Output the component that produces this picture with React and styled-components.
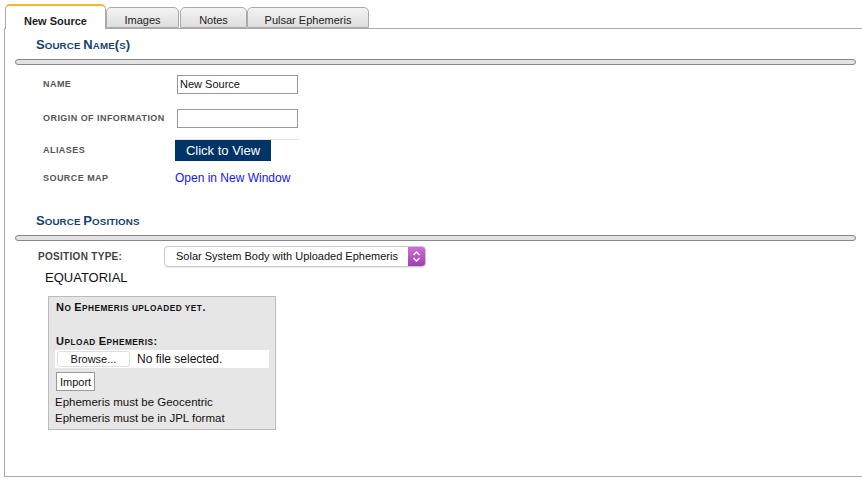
import React from "react";
import styled, { createGlobalStyle } from "styled-components";

const GlobalStyle = createGlobalStyle`
  html, body {
    margin: 0;
    padding: 0;
    background: #ffffff;
    font-family: "Liberation Sans", Arial, sans-serif;
    color: #111;
  }
`;

const Page = styled.div`
  padding: 4px 0 0 4px;
  width: 858px;
  overflow: hidden;
`;

const TabBar = styled.div`
  display: flex;
  align-items: flex-end;
  height: 24px;
  padding-left: 1px;
  position: relative;
  z-index: 1;
`;

const Tab = styled.div`
  box-sizing: border-box;
  width: ${p => p.$w}px;
  height: ${p => (p.$active ? 25 : 21)}px;
  margin-right: ${p => p.$gap || 0}px;
  margin-bottom: ${p => (p.$active ? -1 : 0)}px;
  display: flex;
  align-items: center;
  justify-content: center;
  padding-top: ${p => (p.$active ? 6 : 5)}px;
  font-size: 11px;
  font-weight: ${p => (p.$active ? "bold" : "normal")};
  color: #222;
  border: 1px solid #aaa;
  border-bottom: ${p => (p.$active ? "none" : "1px solid #aaa")};
  border-top: ${p => (p.$active ? "2px solid #f5b731" : "1px solid #aaa")};
  border-radius: 5px 5px 0 0;
  background: ${p =>
    p.$active ? "#ffffff" : "linear-gradient(#f3f3f3, #dedede)"};
`;

const Panel = styled.div`
  border-top: 1px solid #aaa;
  border-left: 1px solid #aaa;
  border-bottom: 1px solid #aaa;
  height: 449px;
  box-sizing: border-box;
  display: flex;
  flex-direction: column;
  align-items: flex-start;
`;

const SectionTitle = styled.div`
  margin: ${p => p.$top}px 0 0 31px;
  height: 16px;
  line-height: 16px;
  font-size: 13px;
  font-weight: bold;
  letter-spacing: 0.1px;
  color: #173f6d;
`;

const Small = styled.span`
  font-size: 0.75em;
  line-height: 1;
`;

const SmallCaps = ({ children }) => {
  const parts = children.match(/[a-z ]+|[^a-z ]+/g) || [];
  return parts.map((part, i) =>
    /[a-z ]/.test(part[0]) ? (
      <Small key={i}>{part.toUpperCase()}</Small>
    ) : (
      <span key={i}>{part}</span>
    )
  );
};

const Rule = styled.div`
  align-self: stretch;
  margin: 6px 6px 0 10px;
  height: 6px;
  box-sizing: border-box;
  background: #e2e2e2;
  border: 1px solid #888;
  border-radius: 3px;
`;

const FieldTable = styled.div`
  margin-top: 3px;
  display: flex;
  flex-direction: column;
`;

const FieldRow = styled.div`
  display: grid;
  grid-template-columns: 132px auto;
  align-items: center;
  height: ${p => p.$h}px;
  padding-left: 38px;
`;

const FieldLabel = styled.div`
  font-size: 9px;
  font-weight: bold;
  color: #555;
  text-transform: uppercase;
  letter-spacing: 0.45px;
`;

const TextInput = styled.input`
  box-sizing: border-box;
  margin-left: 2px;
  width: 121px;
  height: 19px;
  border: 1px solid #999;
  padding: 0 2px;
  font-family: "Liberation Sans", Arial, sans-serif;
  font-size: 11px;
  color: #111;
  outline: none;
`;

const ButtonCell = styled.div`
  width: 125px;
  border-top: 1px solid #e6e6e6;
`;

const ViewButton = styled.button`
  display: block;
  box-sizing: border-box;
  width: 96px;
  height: 21px;
  border: none;
  background: #003366;
  color: #fff;
  font-family: "Liberation Sans", Arial, sans-serif;
  font-size: 13px;
  padding: 0;
  cursor: pointer;
`;

const MapLink = styled.a`
  color: #1515f5;
  font-size: 12px;
  text-decoration: none;
`;

const PositionRow = styled.div`
  margin: 5px 0 0 33px;
  display: flex;
  align-items: center;
  height: 20px;
`;

const PositionLabel = styled.div`
  width: 126px;
  font-size: 10px;
  font-weight: bold;
  color: #444;
  letter-spacing: 0.3px;
`;

const Select = styled.div`
  box-sizing: border-box;
  width: 262px;
  height: 21px;
  display: flex;
  align-items: stretch;
  border: 1px solid #c8c8c8;
  border-radius: 4px;
  background: #fff;
  overflow: hidden;
  box-shadow: 0 1px 1px rgba(0, 0, 0, 0.08);
`;

const SelectText = styled.div`
  flex: 1;
  display: flex;
  align-items: center;
  padding-left: 11px;
  font-size: 11px;
  color: #111;
`;

const Stepper = styled.div`
  width: 17px;
  display: flex;
  align-items: center;
  justify-content: center;
  background: linear-gradient(#cf6fd6, #a23fb0);
`;

const Equatorial = styled.div`
  margin: 4px 0 0 40px;
  line-height: 16px;
  font-size: 13px;
`;

const UploadBox = styled.div`
  margin: 10px 0 0 43px;
  width: 228px;
  box-sizing: border-box;
  background: #e6e6e6;
  border: 1px solid #bbb;
  padding: 2px 6px 3px 6px;
  display: flex;
  flex-direction: column;
  align-items: flex-start;
`;

const BoxHeading = styled.div`
  margin-top: ${p => p.$top || 0}px;
  height: 16px;
  line-height: 16px;
  padding-left: 1px;
  font-size: 11px;
  font-weight: bold;
  letter-spacing: 0.5px;
  color: #111;
`;

const FileRow = styled.div`
  margin-top: 1px;
  align-self: stretch;
  height: 18px;
  background: #fff;
  display: flex;
  align-items: center;
  padding-left: 2px;
  font-size: 12px;
`;

const BrowseButton = styled.div`
  box-sizing: border-box;
  width: 73px;
  height: 16px;
  border: 1px solid #ddd;
  border-radius: 3px;
  display: flex;
  align-items: center;
  justify-content: center;
  font-size: 11px;
  margin-right: 7px;
  background: #fff;
`;

const ImportButton = styled.button`
  margin: 4px 0 0 1px;
  box-sizing: border-box;
  height: 19px;
  padding: 0 3px;
  border: 1px solid #999;
  background: #fff;
  font-family: "Liberation Sans", Arial, sans-serif;
  font-size: 11px;
  color: #111;
`;

const Note = styled.div`
  margin-top: ${p => p.$top || 0}px;
  line-height: 16px;
  font-size: 11.5px;
`;

const StepIcon = () => (
  <svg width="9" height="13" viewBox="0 0 9 13">
    <path d="M1.5 5 L4.5 2 L7.5 5" fill="none" stroke="#fff" strokeWidth="1.4" />
    <path d="M1.5 8 L4.5 11 L7.5 8" fill="none" stroke="#fff" strokeWidth="1.4" />
  </svg>
);

const tabs = [
  { label: "New Source", w: 101, active: true },
  { label: "Images", w: 73, gap: 1 },
  { label: "Notes", w: 67 },
  { label: "Pulsar Ephemeris", w: 122 },
];

export default function App() {
  return (
    <Page>
      <GlobalStyle />
      <TabBar>
        {tabs.map(t => (
          <Tab key={t.label} $w={t.w} $gap={t.gap} $active={t.active}>
            {t.label}
          </Tab>
        ))}
      </TabBar>
      <Panel>
        <SectionTitle $top={8}>
          <SmallCaps>Source Name(s)</SmallCaps>
        </SectionTitle>
        <Rule />
        <FieldTable>
          <FieldRow $h={32}>
            <FieldLabel>Name</FieldLabel>
            <TextInput defaultValue="New Source" />
          </FieldRow>
          <FieldRow $h={36}>
            <FieldLabel>Origin of Information</FieldLabel>
            <TextInput defaultValue="" />
          </FieldRow>
          <FieldRow $h={28}>
            <FieldLabel>Aliases</FieldLabel>
            <ButtonCell>
              <ViewButton>Click to View</ViewButton>
            </ButtonCell>
          </FieldRow>
          <FieldRow $h={28}>
            <FieldLabel>Source Map</FieldLabel>
            <MapLink href="#">Open in New Window</MapLink>
          </FieldRow>
        </FieldTable>

        <SectionTitle $top={21}>
          <SmallCaps>Source Positions</SmallCaps>
        </SectionTitle>
        <Rule />
        <PositionRow>
          <PositionLabel>POSITION TYPE:</PositionLabel>
          <Select>
            <SelectText>Solar System Body with Uploaded Ephemeris</SelectText>
            <Stepper>
              <StepIcon />
            </Stepper>
          </Select>
        </PositionRow>
        <Equatorial>EQUATORIAL</Equatorial>

        <UploadBox>
          <BoxHeading>
            <SmallCaps>No Ephemeris uploaded yet.</SmallCaps>
          </BoxHeading>
          <BoxHeading $top={18}>
            <SmallCaps>Upload Ephemeris:</SmallCaps>
          </BoxHeading>
          <FileRow>
            <BrowseButton>Browse...</BrowseButton>
            No file selected.
          </FileRow>
          <ImportButton>Import</ImportButton>
          <Note $top={3}>Ephemeris must be Geocentric</Note>
          <Note>Ephemeris must be in JPL format</Note>
        </UploadBox>
      </Panel>
    </Page>
  );
}
